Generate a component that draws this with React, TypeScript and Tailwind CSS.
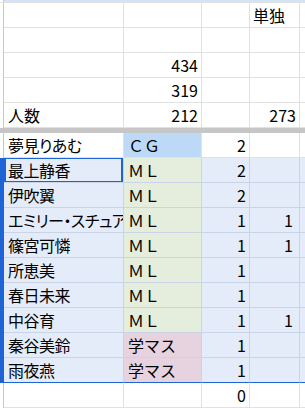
import React from "react";

type Row = {
  name?: string;
  tag?: string;
  kind?: "cg" | "ml" | "gm";
  n?: string;
  solo?: string;
  sel?: boolean;
  active?: boolean;
  last?: boolean;
};

const rows: Row[] = [
  { name: "夢見りあむ", tag: "ＣＧ", kind: "cg", n: "2" },
  { name: "最上静香", tag: "ＭＬ", kind: "ml", n: "2", sel: true, active: true },
  { name: "伊吹翼", tag: "ＭＬ", kind: "ml", n: "2", sel: true },
  { name: "エミリー・スチュアート", tag: "ＭＬ", kind: "ml", n: "1", solo: "1", sel: true },
  { name: "篠宮可憐", tag: "ＭＬ", kind: "ml", n: "1", solo: "1", sel: true },
  { name: "所恵美", tag: "ＭＬ", kind: "ml", n: "1", sel: true },
  { name: "春日未来", tag: "ＭＬ", kind: "ml", n: "1", sel: true },
  { name: "中谷育", tag: "ＭＬ", kind: "ml", n: "1", solo: "1", sel: true },
  { name: "秦谷美鈴", tag: "学マス", kind: "gm", n: "1", sel: true },
  { name: "雨夜燕", tag: "学マス", kind: "gm", n: "1", sel: true, last: true },
  { n: "0" },
];

function TopRow({ a, b, c, cLeft }: { a?: string; b?: string; c?: string; cLeft?: boolean }) {
  return (
    <div className="flex h-[25px]">
      <div className="w-[4px] shrink-0 border-r border-[#c8c8c8]"></div>
      <div className="w-[120px] shrink-0 border-r border-b border-[#e1e1e1] flex items-center pl-[4px] whitespace-nowrap overflow-hidden">
        {a}
      </div>
      <div className="w-[78px] shrink-0 border-r border-b border-[#e1e1e1] flex items-center justify-end pr-[3px]">
        {b}
      </div>
      <div className="w-[48px] shrink-0 border-r border-b border-[#e1e1e1]"></div>
      <div
        className={
          cLeft
            ? "w-[50px] shrink-0 border-r border-b border-[#e1e1e1] flex items-center pl-[3px] whitespace-nowrap"
            : "w-[50px] shrink-0 border-r border-b border-[#e1e1e1] flex items-center justify-end pr-[3px]"
        }
      >
        {c}
      </div>
      <div className="flex-1 border-b border-[#e1e1e1]"></div>
    </div>
  );
}

function DataRow({ r }: { r: Row }) {
  const line = r.last
    ? "border-b-[#1f64d4] border-r-[#c9d4e6]"
    : r.sel
    ? "border-[#c9d4e6]"
    : "border-[#e1e1e1]";
  const fill = r.sel ? "bg-[#e4ecfa]" : "bg-white";
  const tagFill =
    r.kind === "cg"
      ? "bg-[#bcdaf8]"
      : r.kind === "ml"
      ? "bg-[#e5eddc]"
      : r.kind === "gm"
      ? "bg-[#e7d3e0]"
      : "bg-white";

  return (
    <div className="flex h-[25px]">
      <div
        className={
          r.sel
            ? "w-[4px] shrink-0 bg-[#1f64d4]"
            : "w-[4px] shrink-0 border-r border-[#c8c8c8]"
        }
      ></div>
      <div
        className={`relative w-[120px] shrink-0 border-r border-b ${line} ${fill} flex items-center pl-[4px] whitespace-nowrap overflow-hidden tracking-[-0.5px] [font-feature-settings:'palt']`}
      >
        {r.name}
        {r.active && (
          <div className="absolute -top-[1px] left-0 right-0 -bottom-[1px] border-2 border-[#1f64d4]"></div>
        )}
      </div>
      <div
        className={`w-[78px] shrink-0 border-r border-b ${line} ${tagFill} flex items-center pl-[4px]`}
      >
        {r.tag}
      </div>
      <div
        className={`w-[48px] shrink-0 border-r border-b ${line} ${fill} flex items-center justify-end pr-[3px]`}
      >
        {r.n}
      </div>
      <div
        className={`w-[50px] shrink-0 border-r border-b ${line} ${fill} flex items-center justify-end pr-[6px]`}
      >
        {r.solo}
      </div>
      <div className={`flex-1 border-b ${line} ${fill}`}></div>
    </div>
  );
}

export default function App() {
  return (
    <div className="w-[305px] h-[408px] overflow-hidden bg-white text-black text-[16px] font-['Noto_Sans_CJK_JP',sans-serif]">
      <div className="h-[3px] flex border-b border-[#e1e1e1]">
        <div className="w-[4px] border-r border-[#c8c8c8]"></div>
        <div className="flex-1 bg-[#d3e3f8]"></div>
      </div>
      <TopRow c="単独" cLeft />
      <TopRow />
      <TopRow b="434" />
      <TopRow b="319" />
      <TopRow a="人数" b="212" c="273" />
      <div className="h-[5px] bg-[#c6c6c6]"></div>
      {rows.map((r, i) => (
        <DataRow key={i} r={r} />
      ))}
    </div>
  );
}
